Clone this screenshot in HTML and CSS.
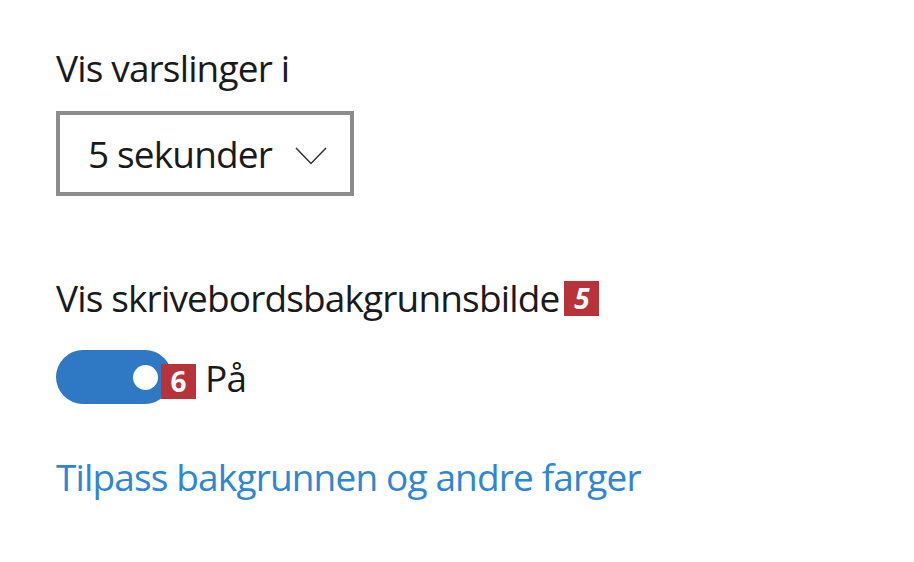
FILE: index.html
```html
<!DOCTYPE html>
<html lang="no">
<head>
<meta charset="utf-8">
<link rel="stylesheet" href="styles.css">
</head>
<body>
<main class="panel">
  <div class="label label-first">Vis varslinger i</div>
  <div class="select">
    <span class="select-text">5 sekunder</span>
    <svg class="chevron" width="32" height="18" viewBox="0 0 32 18"><path d="M1 1 L16 16.5 L31 1" fill="none" stroke="#333" stroke-width="1.5"/></svg>
  </div>
  <div class="label label-second">Vis skrivebordsbakgrunnsbilde<span class="badge">5</span></div>
  <div class="toggle-row">
    <div class="toggle"><span class="knob"></span></div>
    <span class="badge badge-toggle">6</span>
    <span class="toggle-text">På</span>
  </div>
  <a class="link" href="#">Tilpass bakgrunnen og andre farger</a>
</main>
</body>
</html>
```
FILE: styles.css
```css
html, body { margin: 0; padding: 0; background: #fff; }
body { width: 914px; height: 562px; overflow: hidden; font-family: "Open Sans", "Noto Sans", sans-serif; color: #1a1a1a; }
.panel { padding: 43px 0 0 56px; display: flex; flex-direction: column; align-items: flex-start; }
.label { font-size: 37px; line-height: 50px; letter-spacing: -0.85px; }
.select { margin-top: 18px; width: 298px; height: 85px; box-sizing: border-box; border: 4px solid #8c8c8c; display: flex; align-items: center; justify-content: space-between; padding: 0 23px 0 28px; }
.select-text { font-size: 37px; letter-spacing: -0.85px; }
.chevron { margin-top: 4px; }
.label-second { margin-top: 77px; display: flex; align-items: center; }
.badge { display: inline-flex; align-items: center; justify-content: center; width: 35px; height: 35px; background: #b8323a; color: #fff; font-weight: 700; font-style: italic; font-size: 28px; letter-spacing: 0; }
.label-second .badge { margin-left: 5px; }
.toggle-row { margin-top: 27px; display: flex; align-items: center; }
.toggle { width: 116px; height: 54px; border-radius: 27px; background: #2f78c4; position: relative; }
.knob { position: absolute; left: 77px; top: 15px; width: 25px; height: 25px; border-radius: 50%; background: #fff; }
.badge-toggle { margin-left: -11px; position: relative; top: 4px; font-style: normal; }
.toggle-text { margin-left: 9px; font-size: 37px; letter-spacing: -0.85px; }
.link { margin-top: 47px; font-size: 37px; letter-spacing: -0.85px; color: #2e86d4; text-decoration: none; }
```
